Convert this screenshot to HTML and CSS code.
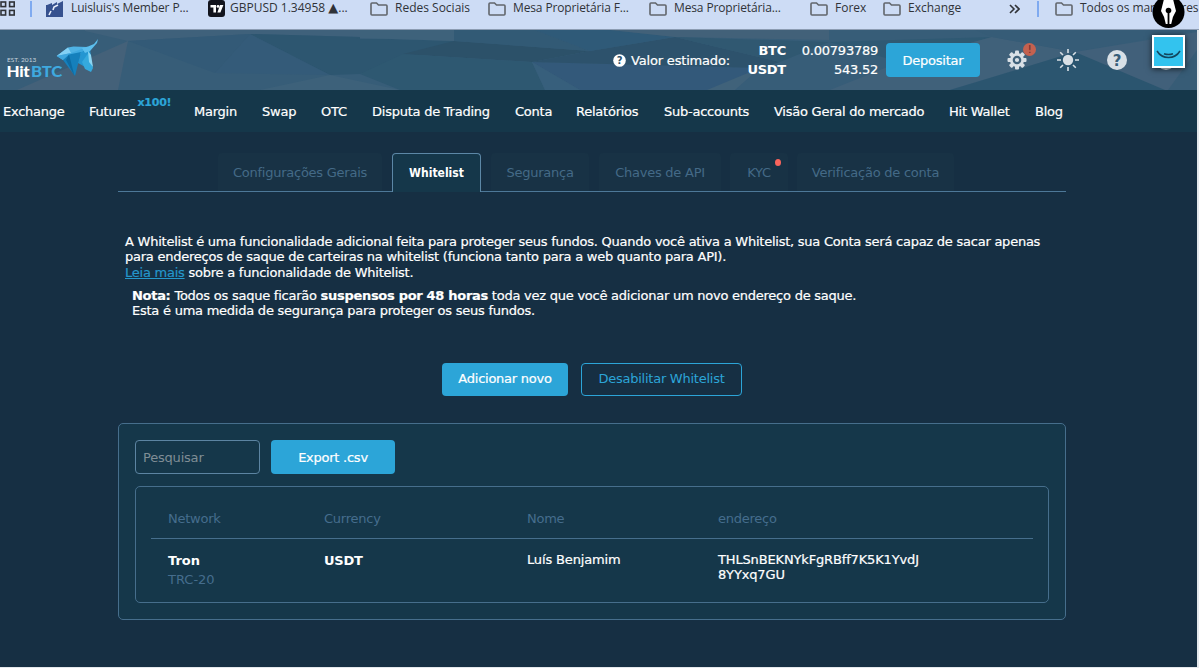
FILE: index.html
```html
<!DOCTYPE html>
<html lang="pt">
<head>
    <meta charset="UTF-8">
    <meta name="viewport" content="width=device-width, initial-scale=1.0">
    <title>HitBTC - Whitelist</title>
    <link rel="stylesheet" href="styles.css">
</head>
<body>
    <svg class="defs" width="0" height="0">
        <symbol id="folder" viewBox="0 0 18 14">
            <path d="M1 2 Q1 1 2 1 H6.5 L8.5 3 H16 Q17 3 17 4 V12 Q17 13 16 13 H2 Q1 13 1 12 Z" fill="none" stroke="#62666c" stroke-width="1.6"/>
        </symbol>
    </svg>

    <div class="bookmarks">
        <svg class="apps" width="16" height="16" viewBox="0 0 16 16" fill="none" stroke="#303338" stroke-width="1.6">
            <rect x="1" y="1" width="4.6" height="4.6"/><rect x="9.6" y="1" width="4.6" height="4.6"/>
            <rect x="1" y="9.4" width="4.6" height="4.6"/><rect x="9.6" y="9.4" width="4.6" height="4.6"/>
        </svg>
        <span class="sep"></span>
        <a class="bm">
            <svg width="18" height="16" viewBox="0 0 18 16">
                <path d="M1 4 L6 2 V4 L11 1 V3 L17 0 V16 H0 V4 Z" fill="#36518f"/>
                <path d="M12 4 L8 6 L7 9 M5 10 L3 14" stroke="#e8eefb" stroke-width="1.6" fill="none"/>
            </svg>
            <span class="tight">Luisluis's Member P...</span>
        </a>
        <a class="bm bm-tv">
            <svg width="17" height="17" viewBox="0 0 17 17">
                <rect width="17" height="17" rx="3" fill="#12141d"/>
                <path d="M2.5 5 H8 V12.5 H5.4 V7.6 H2.5 Z M12 5 H15.4 L12.4 12.5 H9.4 Z" fill="#fff"/>
                <circle cx="10" cy="6.4" r="1.4" fill="#fff"/>
            </svg>
            <span>GBPUSD 1.34958 <i class="up">▲</i>...</span>
        </a>
        <a class="bm"><svg width="18" height="14"><use href="#folder"/></svg><span>Redes Sociais</span></a>
        <a class="bm"><svg width="18" height="14"><use href="#folder"/></svg><span class="tight">Mesa Proprietária F...</span></a>
        <a class="bm"><svg width="18" height="14"><use href="#folder"/></svg><span class="tight">Mesa Proprietária...</span></a>
        <a class="bm"><svg width="18" height="14"><use href="#folder"/></svg><span>Forex</span></a>
        <a class="bm"><svg width="18" height="14"><use href="#folder"/></svg><span>Exchange</span></a>
        <svg class="more" width="11" height="10" viewBox="0 0 11 10" fill="none" stroke="#303338" stroke-width="1.6"><path d="M1 1 L5 5 L1 9 M6 1 L10 5 L6 9"/></svg>
        <span class="sep"></span>
        <a class="bm bm-all"><svg width="18" height="14"><use href="#folder"/></svg><span>Todos os marcadores</span></a>
    </div>

    <div class="page">
        <header class="header">
            <svg class="header-bg" width="1197" height="60" viewBox="0 0 1197 60">
                <rect width="1197" height="60" fill="#375d78"/>
                <path d="M128 11 L118 60 H17 Z" fill="#446179"/>
                <path d="M85 1 L128 11 L250 4 L360 7 V0 H85 Z" fill="#3f617b"/>
                <path d="M128 11 L250 4 L215 43 Z" fill="#335a77"/>
                <path d="M250 4 L360 7 V44 L330 45 Z" fill="#2d5670"/>
                <path d="M250 4 L330 45 L215 43 Z" fill="#31597a" opacity=".5"/>
                <path d="M330 45 L400 60 H260 Z" fill="#3d617a"/>
                <path d="M355 8 L455 11 L360 44 V8 Z" fill="#2d5670"/>
                <path d="M380 0 H454 V11 L360 8 V0 Z" fill="#3e627b"/>
                <path d="M454 11 L590 21 L532 32 L403 24 Z" fill="#2c5169"/>
                <path d="M360 44 L403 24 L532 32 L545 60 H400 Z" fill="#2e5871"/>
                <path d="M454 0 H535 L590 21 L454 11 Z" fill="#325a75"/>
                <path d="M532 32 L580 60 H735 L760 38 Z" fill="#33597a"/>
                <path d="M532 32 L580 60 H545 Z" fill="#375f7c"/>
                <path d="M590 21 L675 7 L780 32 L760 38 L532 32 Z" fill="#2d526c"/>
                <path d="M535 0 H610 L675 7 L590 21 Z" fill="#2f5a78"/>
                <path d="M610 0 H829 V10 L675 7 Z" fill="#426179"/>
                <path d="M675 7 L829 12 L780 32 Z" fill="#305871"/>
                <path d="M760 38 L735 60 H707 Z" fill="#40627a"/>
                <path d="M829 12 L992 7 L900 32 Z" fill="#2f5973"/>
                <path d="M992 7 L1075 22 L950 60 H830 L900 32 Z" fill="#40617a"/>
                <path d="M992 7 L1075 22 L1197 0 H975 Z" fill="#365c77"/>
                <path d="M1075 22 L980 51 L950 60 H1197 Z" fill="#2b556f"/>
                <path d="M1075 22 L1197 2 V60 H1165 Z" fill="#41607a"/>
                <path d="M1197 20 L1168 60 H1197 Z" fill="#375c76"/>
            </svg>
            <svg class="logo" width="100" height="44" viewBox="0 0 100 44">
                <text x="7" y="26.5" class="logo-est" textLength="29">EST. 2013</text>
                <text x="6.5" y="42" class="logo-hit" textLength="23" lengthAdjust="spacingAndGlyphs">Hit</text>
                <text x="31" y="42" class="logo-btc" textLength="31" lengthAdjust="spacingAndGlyphs">BTC</text>
                <path d="M56.7 21 L68 12.5 L73.5 11.5 L87 12 L80 20 L63 25 Z" fill="#4fb2e4"/>
                <path d="M68 12.5 L71 18 L56.7 21 Z" fill="#83d0f4"/>
                <path d="M56.7 21 L71 18 L63 25 Z" fill="#3fa6dd"/>
                <path d="M71 18 L87 12 L82 18 L68 24 Z" fill="#3fa9e0"/>
                <path d="M63 25 L69 19.5 L81 17 L75 41 Z" fill="#1580bc"/>
                <path d="M69 19.5 L74.5 41 L66 25 Z" fill="#0d6ba3"/>
                <path d="M81 17 L90 14 L91 22 L87 33 L78 28 Z" fill="#2496d2"/>
                <path d="M82 13 L88 11.5 L94 9 L98 4 L97 8 L90 16 L85 18 Z" fill="#5cbfee"/>
                <path d="M82 27 L89 17 L93 33 L91 37 L85 34 Z" fill="#35a9dd"/>
                <path d="M88 16 L91 20 L93 32 L89 27 Z" fill="#8cd6f3"/>
            </svg>
            <div class="balance">
                <svg width="13" height="13" viewBox="0 0 13 13">
                    <circle cx="6.5" cy="6.5" r="6.3" fill="#fff"/>
                    <text x="6.5" y="10" class="q-small">?</text>
                </svg>
                <span class="balance-label">Valor estimado:</span>
                <div class="balance-cur"><b>BTC</b><b>USDT</b></div>
                <div class="balance-val"><span>0.00793789</span><span>543.52</span></div>
            </div>
            <button class="btn deposit">Depositar</button>
            <div class="header-icons">
                <div class="gear">
                    <svg width="20" height="20" viewBox="0 0 20 20">
                        <g fill="#d9e0e6">
                            <rect x="8" y="0.5" width="4" height="19" rx="1"/>
                            <rect x="8" y="0.5" width="4" height="19" rx="1" transform="rotate(45 10 10)"/>
                            <rect x="8" y="0.5" width="4" height="19" rx="1" transform="rotate(90 10 10)"/>
                            <rect x="8" y="0.5" width="4" height="19" rx="1" transform="rotate(135 10 10)"/>
                            <circle cx="10" cy="10" r="7"/>
                        </g>
                        <circle cx="10" cy="10" r="3.2" fill="none" stroke="#40617a" stroke-width="2.2"/>
                    </svg>
                    <span class="alert">!</span>
                </div>
                <svg class="sun" width="22" height="22" viewBox="0 0 22 22">
                    <circle cx="11" cy="11" r="5.2" fill="#d9e0e6"/>
                    <path d="M11 0 V4 M11 18 V22 M0 11 H4 M18 11 H22 M3.2 3.2 L6 6 M16 16 L18.8 18.8 M3.2 18.8 L6 16 M16 6 L18.8 3.2" stroke="#d9e0e6" stroke-width="1.6"/>
                </svg>
                <svg width="20" height="20" viewBox="0 0 20 20">
                    <circle cx="10" cy="10" r="10" fill="#d9e0e6"/>
                    <text x="10" y="15.6" class="q-big">?</text>
                </svg>
                <span class="round"></span>
            </div>
        </header>

        <nav class="nav">
            <a>Exchange</a>
            <a>Futures<sup>x100!</sup></a>
            <a>Margin</a>
            <a>Swap</a>
            <a>OTC</a>
            <a>Disputa de Trading</a>
            <a>Conta</a>
            <a>Relatórios</a>
            <a>Sub-accounts</a>
            <a>Visão Geral do mercado</a>
            <a>Hit Wallet</a>
            <a>Blog</a>
        </nav>

        <main class="content">
            <div class="tabs">
                <a class="tab t-config">Configurações Gerais</a>
                <a class="tab active">Whitelist</a>
                <a class="tab t-seg">Segurança</a>
                <a class="tab t-api">Chaves de API</a>
                <a class="tab t-kyc">KYC<i class="dot"></i></a>
                <a class="tab t-ver">Verificação de conta</a>
            </div>

            <p class="info">
                A Whitelist é uma funcionalidade adicional feita para proteger seus fundos. Quando você ativa a Whitelist, sua Conta será capaz de sacar apenas<br>
                para endereços de saque de carteiras na whitelist (funciona tanto para a web quanto para API).<br>
                <a class="link">Leia mais</a> sobre a funcionalidade de Whitelist.
            </p>
            <p class="note">
                <b>Nota:</b> Todos os saque ficarão <b>suspensos por 48 horas</b> toda vez que você adicionar um novo endereço de saque.<br>
                Esta é uma medida de segurança para proteger os seus fundos.
            </p>

            <div class="actions">
                <button class="btn add">Adicionar novo</button>
                <button class="btn outline">Desabilitar Whitelist</button>
            </div>

            <div class="panel">
                <div class="tools">
                    <input type="text" class="search" placeholder="Pesquisar">
                    <button class="btn export">Export .csv</button>
                </div>
                <div class="list">
                    <div class="row head">
                        <span>Network</span>
                        <span>Currency</span>
                        <span>Nome</span>
                        <span>endereço</span>
                    </div>
                    <div class="row">
                        <div class="network"><b>Tron</b><span>TRC-20</span></div>
                        <b>USDT</b>
                        <span class="name">Luís Benjamim</span>
                        <span class="address">THLSnBEKNYkFgRBff7K5K1YvdJ<br>8YYxq7GU</span>
                    </div>
                </div>
            </div>
        </main>
    </div>

    <!-- browser extension widgets over the page -->
    <div class="pen">
        <svg width="33" height="33" viewBox="0 0 33 33">
            <circle cx="16.5" cy="17" r="16" fill="#000"/>
            <path d="M12 4 H21 L24 16 Q20 22 19.2 29 H13.8 Q13 22 9 16 Z" fill="#fff"/>
            <path d="M16.5 16 V30" stroke="#000" stroke-width="1.8"/>
            <circle cx="16.5" cy="15.5" r="2.8" fill="#000"/>
        </svg>
    </div>
    <div class="smile">
        <svg width="29" height="29" viewBox="0 0 29 29" fill="none" stroke="#12475f" stroke-width="1.5">
            <path d="M3 14 Q7 20.5 14.5 20.5 Q22 20.5 26 14 M10 16.8 Q14.5 18.4 19 16.8"/>
        </svg>
    </div>
</body>
</html>
```
FILE: styles.css
```css
* {
    box-sizing: border-box;
}
body {
    margin: 0;
    height: 668px;
    overflow: hidden;
    position: relative;
    background-color: #e4e8ec;
    font-family: Verdana, "DejaVu Sans", sans-serif;
    font-size: 13px;
    letter-spacing: -0.24px;
    color: #fff;
}
.defs {
    position: absolute;
}

/* bookmarks bar */
.bookmarks {
    display: grid;
    grid-template-columns: 30px 16px 162px 162px 118px 161px 161px 73px 126px 28px 18px 1fr;
    align-items: center;
    height: 30px;
    padding-bottom: 15px;
    background-color: #cddcf5;
    border-bottom: 1px solid #8d9db3;
    font-family: "Segoe UI", "Open Sans", sans-serif;
    font-size: 12px;
    letter-spacing: 0;
    color: #303338;
}
.bm {
    display: flex;
    align-items: center;
    gap: 7px;
    white-space: nowrap;
}
.bm span {
    margin-top: -3px;
}
.bm-tv {
    gap: 5px;
}
.up {
    font-family: "DejaVu Sans", sans-serif;
    font-size: 13px;
    font-style: normal;
    line-height: 10px;
}
.bm-all {
    letter-spacing: -0.1px;
}
.tight {
    letter-spacing: -0.13px;
}
.sep {
    width: 2px;
    height: 16px;
    background-color: #7faaf0;
}

.page {
    width: 1197px;
    height: 637px;
    background-color: #162f43;
}

/* header */
.header {
    position: relative;
    display: flex;
    align-items: center;
    height: 60px;
}
.header-bg {
    position: absolute;
    top: 0;
    left: 0;
}
.header > *:not(.header-bg) {
    position: relative;
}
.logo {
    margin-top: -6px;
}
.logo-est {
    font: 6.5px Lato, sans-serif;
    fill: #c5d2dc;
}
.logo-hit, .logo-btc {
    font: 900 15px Lato, sans-serif;
    fill: #fff;
}
.logo-btc {
    fill: #3fa9df;
}
.q-small {
    font: bold 10px "DejaVu Sans", sans-serif;
    fill: #2d526c;
    text-anchor: middle;
}
.q-big {
    font: bold 15px "DejaVu Sans", sans-serif;
    fill: #375d78;
    text-anchor: middle;
}
.balance {
    display: flex;
    align-items: center;
    width: 265px;
    margin-left: 513px;
}
.balance-label {
    margin-left: 5px;
    width: 100px;
    white-space: nowrap;
    letter-spacing: -0.18px;
}
.balance-cur, .balance-val {
    display: flex;
    flex-direction: column;
    align-items: flex-end;
    line-height: 19px;
}
.balance-cur {
    width: 55px;
}
.balance-val {
    width: 92px;
}
.balance-label, .balance-val, .nav > a, .info, .note, .name, .address, .add, .deposit, .export {
    -webkit-text-stroke: 0.2px;
}
.btn {
    height: 33px;
    padding: 0 0 2px;
    border: none;
    border-radius: 4px;
    background-color: #2ca5d8;
    color: #fff;
    font-family: inherit;
    font-size: 13px;
    letter-spacing: -0.25px;
    text-align: center;
    white-space: nowrap;
}
.deposit {
    width: 94px;
    height: 34px;
    margin-left: 8px;
    padding: 0;
}
.header-icons {
    display: flex;
    align-items: center;
    margin-left: 27px;
    gap: 29px;
}
.gear {
    position: relative;
    height: 20px;
}
.sun {
    margin: 0 -1px 0 1px;
}
.alert {
    position: absolute;
    top: -7px;
    left: 16px;
    width: 13px;
    height: 13px;
    border-radius: 50%;
    background-color: #c4614f;
    color: #6d2f2c;
    font-size: 11px;
    line-height: 13px;
    text-align: center;
}
.round {
    width: 20px;
    height: 20px;
    border-radius: 50%;
    background-color: #d9e0e6;
}

/* main menu */
.nav {
    display: grid;
    grid-template-columns: 86px 105px 68px 59px 51px 143px 61px 88px 110px 175px 86px 1fr;
    align-items: center;
    height: 42px;
    padding-left: 3px;
    background-color: #15374a;
    white-space: nowrap;
}
.nav sup {
    margin-left: 2px;
    font-size: 11px;
    font-weight: bold;
    line-height: 0;
    vertical-align: 10px;
    color: #2ca5d8;
}

.content {
    width: 948px;
    margin-left: 118px;
    padding-top: 21px;
}

/* tabs */
.tabs {
    display: flex;
    align-items: flex-end;
    height: 39px;
    padding-left: 100px;
    border-bottom: 1px solid #4d7898;
}
.tab {
    position: relative;
    height: 38px;
    line-height: 39px;
    text-align: center;
    color: #446a87;
    background-color: #183245;
    border-radius: 4px 4px 0 0;
    white-space: nowrap;
}
.tab.active {
    width: 89px;
    height: 39px;
    margin: 0 10px;
    margin-bottom: -1px;
    background-color: #15374a;
    border: 1px solid #5c87a6;
    border-bottom: none;
    color: #fff;
    font-family: "DejaVu Sans Condensed", "DejaVu Sans", sans-serif;
    font-stretch: condensed;
    font-weight: bold;
    font-size: 12px;
    letter-spacing: 0;
}
.t-config {
    width: 164px;
}
.t-seg {
    width: 98px;
}
.t-api {
    width: 122px;
    margin-left: 10px;
}
.t-kyc {
    width: 58px;
    margin-left: 9px;
}
.t-ver {
    width: 157px;
    margin-left: 9px;
}
.dot {
    position: absolute;
    top: 6px;
    right: 7px;
    width: 6px;
    height: 7px;
    border-radius: 50%;
    background-color: #f9645c;
}

/* texts */
.info, .note {
    margin: 0;
    line-height: 15.4px;
    white-space: nowrap;
}
.info {
    padding: 42px 0 0 7px;
}
.note {
    padding: 8px 0 0 14px;
    line-height: 15px;
}
.note b {
    letter-spacing: -0.3px;
}
.link {
    color: #2497cb;
    text-decoration: underline;
}

.actions {
    display: flex;
    gap: 13px;
    margin: 45px 0 27px 324px;
}
.add {
    width: 126px;
}
.outline {
    width: 161px;
    background: none;
    border: 1px solid #2ca5d8;
    color: #2ca5d8;
}

/* addresses */
.panel {
    height: 197px;
    padding: 16px;
    border: 1px solid #466e8c;
    border-radius: 5px;
    background-color: #15374a;
}
.tools {
    display: flex;
    gap: 11px;
}
.search {
    width: 125px;
    height: 34px;
    padding: 0 7px;
    border: 1px solid #5c84a2;
    border-radius: 4px;
    background: none;
    color: #fff;
    font-family: inherit;
    font-size: 13px;
    letter-spacing: -0.2px;
}
.search::placeholder {
    color: #7f8d95;
}
.export {
    width: 124px;
    height: 34px;
    padding: 0;
}
.list {
    height: 117px;
    margin-top: 12px;
    padding: 15px;
    border: 1px solid #466e8c;
    border-radius: 5px;
}
.row {
    display: grid;
    grid-template-columns: 156px 203px 191px 1fr;
    padding: 14px 0 0 17px;
    line-height: 15px;
}
.row.head {
    height: 37px;
    padding-top: 9px;
    border-bottom: 1px solid #466e8c;
    color: #456d8d;
}
.network {
    letter-spacing: 0;
}
.network span {
    display: block;
    margin-top: 4px;
    color: #456d8d;
}
.name, .address {
    margin-top: -1px;
    letter-spacing: -0.15px;
}

/* extension widgets */
.pen {
    position: absolute;
    top: -5px;
    left: 1152px;
}
.smile {
    position: absolute;
    top: 35px;
    left: 1152px;
    width: 33px;
    height: 33px;
    border: 2px solid #fff;
    background-color: #33c3ee;
    box-shadow: 0 1px 6px rgba(0, 0, 0, 0.7);
}
```
